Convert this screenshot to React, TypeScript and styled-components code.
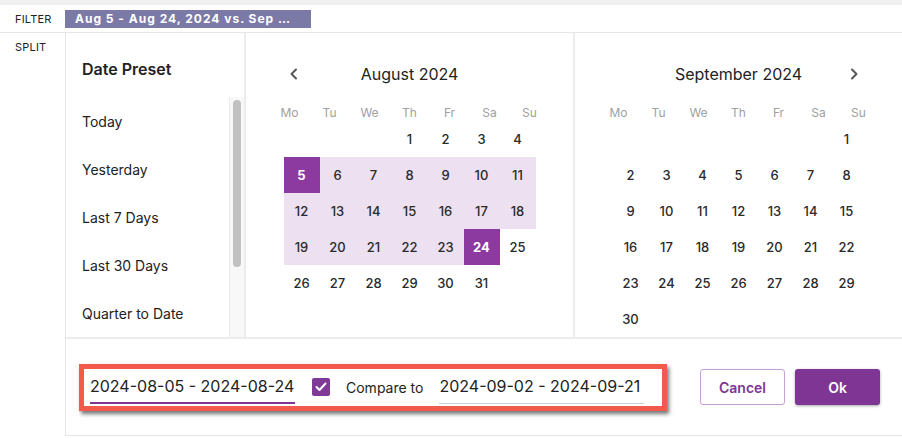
import React from "react";
import styled, { createGlobalStyle, css } from "styled-components";

const Global = createGlobalStyle`
  html, body { margin: 0; padding: 0; background: #fff; }
  body { font-family: Inter, "Noto Sans", sans-serif; color: #222; }
  * { box-sizing: border-box; }
`;

const Page = styled.div`
  width: 902px;
  height: 438px;
  overflow: hidden;
  background: #fff;
`;

const TopStrip = styled.div`
  height: 5px;
  background: #f0f0f0;
`;

const FilterRow = styled.div`
  height: 28px;
  display: flex;
  align-items: center;
  border-bottom: 1px solid #e6e6e6;
`;

const SideLabel = styled.div`
  width: 65px;
  padding-left: 15px;
  font-size: 11px;
  letter-spacing: 0.2px;
  color: #222;
  flex: none;
`;

const FilterTag = styled.div`
  width: 246px;
  height: 18px;
  background: #7b7aa7;
  color: #fff;
  font-weight: 700;
  font-size: 12px;
  letter-spacing: 1px;
  line-height: 18px;
  padding-left: 10px;
  white-space: nowrap;
  overflow: hidden;
`;

const Body = styled.div`
  display: flex;
`;

const SideColumn = styled.div`
  width: 65px;
  flex: none;
  padding-top: 7px;
`;

const Panel = styled.div`
  flex: 1;
  border-left: 1px solid #e6e6e6;
  border-bottom: 1px solid #e6e6e6;
  display: flex;
  flex-direction: column;
`;

const TopSection = styled.div`
  height: 306px;
  display: flex;
  border-bottom: 2px solid #ececec;
`;

const Presets = styled.div`
  width: 180px;
  flex: none;
  border-right: 2px solid #ececec;
  display: flex;
  flex-direction: column;
`;

const PresetTitle = styled.div`
  height: 64px;
  padding: 24px 0 0 16px;
  font-size: 16px;
  line-height: 24px;
  font-weight: 600;
  color: #222;
`;

const PresetBody = styled.div`
  height: 240px;
  display: flex;
`;

const PresetList = styled.div`
  flex: 1;
  overflow: hidden;
`;

const ScrollTrack = styled.div`
  width: 15px;
  flex: none;
  background: #f8f8f8;
  border-left: 1px solid #ececec;
  padding: 3px 3px 0 3px;
`;

const ScrollThumb = styled.div`
  width: 8px;
  height: 167px;
  border-radius: 4px;
  background: #c1c1c1;
`;

const PresetItem = styled.div`
  height: 48px;
  display: flex;
  align-items: center;
  padding-left: 16px;
  font-size: 14px;
  color: #222;
`;

const CalendarPanel = styled.div<{ $divider?: boolean }>`
  flex: 1;
  display: flex;
  flex-direction: column;
  align-items: center;
  padding-top: 27px;
  ${(p) => p.$divider && css`border-right: 2px solid #ececec;`}
`;

const CalHeader = styled.div`
  width: 252px;
  height: 28px;
  display: grid;
  grid-template-columns: 20px 1fr 20px;
  align-items: center;
`;

const CalTitle = styled.div`
  text-align: center;
  font-size: 16px;
  color: #222;
`;

const NavButton = styled.div`
  display: flex;
  align-items: center;
  justify-content: center;
  color: #555;
`;

const WeekRow = styled.div`
  margin-top: 15px;
  height: 18px;
  display: grid;
  grid-template-columns: repeat(7, 40px);
  align-items: center;
`;

const WeekDay = styled.div`
  text-align: center;
  font-size: 12px;
  color: #a0a0a0;
`;

const DayGrid = styled.div`
  display: grid;
  grid-template-columns: repeat(7, 36px);
  grid-auto-rows: 36px;
`;

type DayState = "none" | "edge" | "in";

const Day = styled.div<{ $state: DayState }>`
  display: flex;
  align-items: center;
  justify-content: center;
  font-size: 13px;
  font-weight: 500;
  color: #2a2a2a;
  ${(p) =>
    p.$state === "in" &&
    css`
      background: #ede0f0;
    `}
  ${(p) =>
    p.$state === "edge" &&
    css`
      background: #8c3a9f;
      color: #fff;
      font-weight: 700;
    `}
`;

const Footer = styled.div`
  height: 96px;
  display: flex;
  align-items: center;
  padding: 0 22px 0 13px;
`;

const Highlight = styled.div`
  width: 588px;
  height: 47px;
  border: 5px solid #f45a4c;
  box-shadow: 2px 3px 4px rgba(0, 0, 0, 0.55);
  display: flex;
  align-items: center;
  padding-left: 6px;
`;

const DateField = styled.div<{ $active?: boolean }>`
  width: 205px;
  height: 34px;
  padding-top: 4px;
  font-size: 16px;
  line-height: 24px;
  color: #222;
  white-space: nowrap;
  ${(p) =>
    p.$active
      ? css`border-bottom: 2px solid #7e3594;`
      : css`border-bottom: 1px solid #c9ced4; padding-bottom: 1px;`}
`;

const CheckBox = styled.div`
  width: 18px;
  height: 18px;
  border-radius: 2px;
  background: #7e3a96;
  margin-left: 17px;
  display: flex;
  align-items: center;
  justify-content: center;
`;

const CompareLabel = styled.div`
  margin: 0 16px 0 16px;
  font-size: 14px;
  color: #222;
`;

const Actions = styled.div`
  margin-left: auto;
  display: flex;
  gap: 10px;
`;

const Button = styled.button<{ $primary?: boolean }>`
  width: 85px;
  height: 36px;
  border-radius: 3px;
  font-family: Inter, "Noto Sans", sans-serif;
  font-size: 14px;
  font-weight: 600;
  cursor: pointer;
  ${(p) =>
    p.$primary
      ? css`
          background: #7e3594;
          color: #fff;
          border: none;
          box-shadow: 0 1px 3px rgba(0, 0, 0, 0.35);
        `
      : css`
          background: #fff;
          color: #7e3594;
          border: 1px solid #c7a0d6;
        `}
`;

const Chevron = ({ dir }: { dir: "left" | "right" }) => (
  <svg width="9" height="12" viewBox="0 0 9 12" fill="none">
    <polyline
      points={dir === "left" ? "7,1.5 2.5,6 7,10.5" : "2,1.5 6.5,6 2,10.5"}
      stroke="currentColor"
      strokeWidth="2"
      strokeLinecap="round"
      strokeLinejoin="round"
    />
  </svg>
);

const WEEK = ["Mo", "Tu", "We", "Th", "Fr", "Sa", "Su"];

interface MonthProps {
  title: string;
  offset: number;
  days: number;
  start?: number;
  end?: number;
  nav: "left" | "right";
  divider?: boolean;
}

const Month = ({ title, offset, days, start, end, nav, divider }: MonthProps) => {
  const cells: React.ReactNode[] = [];
  for (let i = 0; i < offset; i++) cells.push(<Day key={`e${i}`} $state="none" />);
  for (let d = 1; d <= days; d++) {
    let state: DayState = "none";
    if (start && end) {
      if (d === start || d === end) state = "edge";
      else if (d > start && d < end) state = "in";
    }
    cells.push(
      <Day key={d} $state={state}>
        {d}
      </Day>
    );
  }
  return (
    <CalendarPanel $divider={divider}>
      <CalHeader>
        <NavButton>{nav === "left" && <Chevron dir="left" />}</NavButton>
        <CalTitle>{title}</CalTitle>
        <NavButton>{nav === "right" && <Chevron dir="right" />}</NavButton>
      </CalHeader>
      <WeekRow>
        {WEEK.map((w) => (
          <WeekDay key={w}>{w}</WeekDay>
        ))}
      </WeekRow>
      <DayGrid>{cells}</DayGrid>
    </CalendarPanel>
  );
};

const PRESETS = ["Today", "Yesterday", "Last 7 Days", "Last 30 Days", "Quarter to Date"];

export default function App() {
  return (
    <Page>
      <Global />
      <TopStrip />
      <FilterRow>
        <SideLabel>FILTER</SideLabel>
        <FilterTag>Aug 5 - Aug 24, 2024 vs. Sep …</FilterTag>
      </FilterRow>
      <Body>
        <SideColumn>
          <SideLabel>SPLIT</SideLabel>
        </SideColumn>
        <Panel>
          <TopSection>
            <Presets>
              <PresetTitle>Date Preset</PresetTitle>
              <PresetBody>
                <PresetList>
                  {PRESETS.map((p) => (
                    <PresetItem key={p}>{p}</PresetItem>
                  ))}
                </PresetList>
                <ScrollTrack>
                  <ScrollThumb />
                </ScrollTrack>
              </PresetBody>
            </Presets>
            <Month title="August 2024" offset={3} days={31} start={5} end={24} nav="left" divider />
            <Month title="September 2024" offset={6} days={30} nav="right" />
          </TopSection>
          <Footer>
            <Highlight>
              <DateField $active>2024-08-05 - 2024-08-24</DateField>
              <CheckBox>
                <svg width="12" height="10" viewBox="0 0 12 10" fill="none">
                  <polyline
                    points="1.5,5 4.5,8 10.5,1.5"
                    stroke="#fff"
                    strokeWidth="2"
                    strokeLinecap="round"
                    strokeLinejoin="round"
                  />
                </svg>
              </CheckBox>
              <CompareLabel>Compare to</CompareLabel>
              <DateField>2024-09-02 - 2024-09-21</DateField>
            </Highlight>
            <Actions>
              <Button>Cancel</Button>
              <Button $primary>Ok</Button>
            </Actions>
          </Footer>
        </Panel>
      </Body>
    </Page>
  );
}
